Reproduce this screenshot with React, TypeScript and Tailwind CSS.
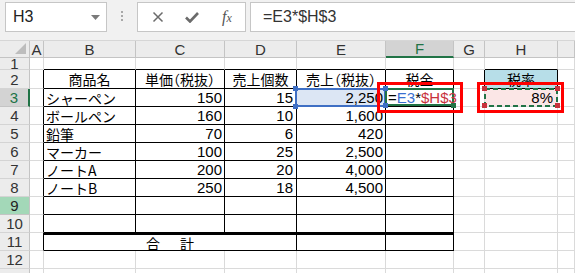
import React from "react";

const jp = "font-['Noto_Sans_CJK_JP','Noto_Sans_CJK_SC',sans-serif]";
const num = "font-['Liberation_Sans_Narrow','Liberation_Sans',sans-serif]";

const GRID = "border-r border-b border-r-[#dadada] border-b-[#dadada]";
const TBL = "border-r border-b border-r-black border-b-black";
const ACELL = "border-r border-b border-r-black border-b-[#dadada]";
const TOPB = "border-r border-b border-r-[#dadada] border-b-black";
const HEAD =
  "border-r border-b border-r-[#c4c4c4] border-b-[#c4c4c4] bg-[#ececec] flex items-center justify-center text-[15px] leading-none text-[#333] font-['Liberation_Sans',sans-serif]";

function RowHead({ n, cls }: { n?: number; cls?: string }) {
  return (
    <div
      className={
        cls ??
        "border-r border-b border-r-[#c4c4c4] border-b-[#d4d4d4] bg-[#ececec] flex items-center justify-center text-[15px] leading-none text-[#333] font-['Liberation_Sans',sans-serif]"
      }
    >
      {n}
    </div>
  );
}

const rows = [
  ["シャーペン", "150", "15", "2,250"],
  ["ボールペン", "160", "10", "1,600"],
  ["鉛筆", "70", "6", "420"],
  ["マーカー", "100", "25", "2,500"],
  ["ノートA", "200", "20", "4,000"],
  ["ノートB", "250", "18", "4,500"],
];

function Sq({ cls }: { cls: string }) {
  return <div className={cls} />;
}

export default function App() {
  return (
    <div className="w-[575px] h-[273px] overflow-hidden bg-white">
      {/* formula bar */}
      <div className="flex h-[41px] bg-[#f1f1f1] border-b border-b-[#d6d6d6]">
        <div className="ml-[5px] mt-[2px] h-[30px] w-[102px] bg-white border border-[#c6c6c6] flex items-center justify-between pl-[7px] pr-[6px]">
          <span className="text-[16px] text-[#222] font-['Liberation_Sans',sans-serif]">H3</span>
          <svg width="9" height="5" viewBox="0 0 9 5">
            <path d="M0 0H9L4.5 5Z" fill="#7a7a7a" />
          </svg>
        </div>
        <div className="w-[30px] h-[32px] flex flex-col items-center justify-center gap-[2px]">
          <div className="w-[2px] h-[2px] bg-[#a8a8a8]" />
          <div className="w-[2px] h-[2px] bg-[#a8a8a8]" />
          <div className="w-[2px] h-[2px] bg-[#a8a8a8]" />
        </div>
        <div className="mt-[2px] h-[30px] w-[109px] bg-white border border-[#c6c6c6] flex items-center pl-[14px]">
          <svg width="12" height="12" viewBox="0 0 12 12">
            <path d="M1.5 1.5L10.5 10.5M10.5 1.5L1.5 10.5" stroke="#6b6b6b" strokeWidth="1.5" />
          </svg>
          <svg className="ml-[21px]" width="14" height="11" viewBox="0 0 14 11">
            <path d="M1 5.5L5 9.5L13 1" stroke="#6b6b6b" strokeWidth="2.6" fill="none" />
          </svg>
          <span className="ml-[23px] font-['Liberation_Serif',serif] italic text-[#555] leading-none">
            <span className="text-[16px]">f</span>
            <span className="text-[12px]">x</span>
          </span>
        </div>
        <div className="ml-[4px] mt-[2px] h-[30px] flex-1 bg-white border border-r-0 border-[#c6c6c6] flex items-center pl-[12px] text-[16px] text-[#333] font-['Liberation_Sans',sans-serif]">
          =E3*$H$3
        </div>
      </div>

      {/* sheet grid */}
      <div className="grid grid-cols-[30px_14px_92px_89px_72px_89px_68px_31px_73px_1fr] grid-rows-[17px_12px_19px_repeat(11,18px)] text-black">
        {/* header row */}
        <div className="border-r border-b border-r-[#c4c4c4] border-b-[#c4c4c4] bg-[#ececec] flex items-end justify-end pr-[3px] pb-[3px]">
          <svg width="11" height="11" viewBox="0 0 11 11">
            <path d="M11 0V11H0Z" fill="#bdbdbd" />
          </svg>
        </div>
        <div className={HEAD}>A</div>
        <div className={HEAD}>B</div>
        <div className={HEAD}>C</div>
        <div className={HEAD}>D</div>
        <div className={HEAD}>E</div>
        <div className="border-r border-b-2 border-r-[#c4c4c4] border-b-[#217346] bg-[#d3d3d3] flex items-center justify-center text-[15px] leading-none text-[#217346] font-['Liberation_Sans',sans-serif]">
          F
        </div>
        <div className={HEAD}>G</div>
        <div className={HEAD}>H</div>
        <div className={HEAD}></div>

        {/* row 1 */}
        <RowHead n={1} />
        <div className={GRID} />
        <div className={TOPB} />
        <div className={TOPB} />
        <div className={TOPB} />
        <div className={TOPB} />
        <div className={TOPB} />
        <div className={GRID} />
        <div className={TOPB} />
        <div className={GRID} />

        {/* row 2 */}
        <RowHead n={2} />
        <div className={ACELL} />
        <div className={`${TBL} ${jp} flex items-center justify-center text-[14px] leading-none`}>商品名</div>
        <div className={`${TBL} ${jp} flex items-center justify-center text-[14px] leading-none [font-feature-settings:'halt']`}>単価（税抜）</div>
        <div className={`${TBL} ${jp} flex items-center justify-center text-[14px] leading-none`}>売上個数</div>
        <div className={`${TBL} ${jp} flex items-center justify-center text-[14px] leading-none [font-feature-settings:'halt']`}>売上（税抜）</div>
        <div className={`${TBL} ${jp} flex items-center justify-center text-[14px] leading-none`}>税金</div>
        <div className="border-r border-b border-r-black border-b-[#dadada]" />
        <div className={`${TBL} ${jp} bg-[#b7dee8] flex items-center justify-center text-[14px] leading-none`}>税率</div>
        <div className={GRID} />

        {/* data rows */}
        {rows.map((r, i) => {
          const first = i === 0;
          return (
            <React.Fragment key={i}>
              {first ? (
                <RowHead
                  n={3}
                  cls="border-r-2 border-b border-r-[#217346] border-b-[#c4c4c4] bg-[#d3d3d3] flex items-center justify-center text-[15px] leading-none text-[#217346] font-['Liberation_Sans',sans-serif]"
                />
              ) : (
                <RowHead n={i + 3} />
              )}
              <div className={ACELL} />
              <div className={`${TBL} ${jp} flex items-center pl-[2px] text-[14px] leading-none whitespace-nowrap`}>{r[0]}</div>
              <div className={`${TBL} ${num} flex items-center justify-end pr-[2px] text-[15px] leading-none`}>{r[1]}</div>
              <div className={`${TBL} ${num} flex items-center justify-end pr-[3px] text-[15px] leading-none`}>{r[2]}</div>
              {first ? (
                <div className={`${TBL} ${num} relative bg-[#dce6f4] flex items-center justify-end pr-[2px] text-[15px] leading-none`}>
                  {r[3]}
                  <div className="absolute left-[-2px] top-[-1px] right-[-1px] bottom-[-1px] border-2 border-[#3e6fc4]" />
                  <Sq cls="absolute left-[-4px] top-[-3px] w-[5px] h-[5px] bg-[#3e6fc4]" />
                  <Sq cls="absolute left-[-4px] bottom-[-3px] w-[5px] h-[5px] bg-[#3e6fc4]" />
                </div>
              ) : (
                <div className={`${TBL} ${num} flex items-center justify-end pr-[2px] text-[15px] leading-none`}>{r[3]}</div>
              )}
              {first ? (
                <div className={`${TBL} relative flex items-center pl-[2px] text-[15px] leading-none whitespace-nowrap font-['Liberation_Sans',sans-serif]`}>
                  <span className="relative z-[5]">
                    <span className="text-black">=</span>
                    <span className="text-[#3a6fd0]">E3</span>
                    <span className="text-black">*</span>
                    <span className="text-[#c8323c]">$H$3</span>
                  </span>
                  <div className="absolute left-[-1px] top-[-1px] right-[-1px] bottom-0 border-2 border-[#217346] z-[4]" />
                  <Sq cls="absolute left-[-3px] top-[-3px] w-[5px] h-[5px] bg-[#3e6fc4] z-[6]" />
                  <Sq cls="absolute left-[-3px] bottom-[-2px] w-[5px] h-[5px] bg-[#3e6fc4] z-[6]" />
                  <Sq cls="absolute right-[-3px] bottom-[-2px] w-[5px] h-[5px] bg-[#217346] z-[6]" />
                  <div className="absolute left-[-9px] top-[-7px] w-[86px] h-[31px] border-[3px] border-[#ff0000] z-20" />
                </div>
              ) : (
                <div className={TBL} />
              )}
              <div className={GRID} />
              {first ? (
                <div className={`${GRID} relative bg-[#fbe6e6] flex items-center justify-end pr-[4px] text-[15px] leading-none ${num}`}>
                  <span className="relative z-[5]">8%</span>
                  <svg className="absolute left-[-1px] top-[-1px] z-[4]" width="74" height="19" viewBox="0 0 74 19">
                    <rect x="1" y="1" width="72" height="17" fill="none" stroke="#217346" strokeWidth="2" strokeDasharray="5 3" />
                  </svg>
                  <Sq cls="absolute left-[-3px] top-[-3px] w-[5px] h-[5px] bg-[#c8323c] z-[6]" />
                  <Sq cls="absolute right-[-3px] top-[-3px] w-[5px] h-[5px] bg-[#c8323c] z-[6]" />
                  <Sq cls="absolute left-[-3px] bottom-[-2px] w-[5px] h-[5px] bg-[#c8323c] z-[6]" />
                  <Sq cls="absolute right-[-3px] bottom-[-2px] w-[5px] h-[5px] bg-[#c8323c] z-[6]" />
                  <div className="absolute left-[-8px] top-[-7px] w-[87px] h-[31px] border-[3px] border-[#ff0000] z-20" />
                </div>
              ) : (
                <div className={GRID} />
              )}
              <div className={GRID} />
            </React.Fragment>
          );
        })}

        {/* row 9 */}
        <RowHead
          n={9}
          cls="border-r border-b border-r-[#c4c4c4] border-b-[#c4c4c4] bg-[#a3d8b8] flex items-center justify-center text-[15px] leading-none text-[#222] font-['Liberation_Sans',sans-serif]"
        />
        <div className={ACELL} />
        <div className={TBL} />
        <div className={TBL} />
        <div className={TBL} />
        <div className={TBL} />
        <div className={TBL} />
        <div className={GRID} />
        <div className={GRID} />
        <div className={GRID} />

        {/* row 10 */}
        <RowHead n={10} />
        <div className={ACELL} />
        <div className={TBL} />
        <div className={TBL} />
        <div className={TBL} />
        <div className={TBL} />
        <div className={TBL} />
        <div className={GRID} />
        <div className={GRID} />
        <div className={GRID} />

        {/* row 11 */}
        <RowHead n={11} />
        <div className={ACELL} />
        <div className={`${TBL} col-span-3 border-t-2 border-t-black ${jp} flex items-center justify-center gap-[20px] text-[14px] leading-none`}>
          <span>合</span>
          <span>計</span>
        </div>
        <div className={`${TBL} border-t-2 border-t-black`} />
        <div className={`${TBL} border-t-2 border-t-black`} />
        <div className={GRID} />
        <div className={GRID} />
        <div className={GRID} />

        {/* row 12 */}
        <RowHead n={12} />
        <div className={GRID} />
        <div className={GRID} />
        <div className={GRID} />
        <div className={GRID} />
        <div className={GRID} />
        <div className={GRID} />
        <div className={GRID} />
        <div className={GRID} />
        <div className={GRID} />

        {/* row 13 (label below the visible area) */}
        <RowHead />
        <div className={GRID} />
        <div className={GRID} />
        <div className={GRID} />
        <div className={GRID} />
        <div className={GRID} />
        <div className={GRID} />
        <div className={GRID} />
        <div className={GRID} />
        <div className={GRID} />
      </div>
    </div>
  );
}
